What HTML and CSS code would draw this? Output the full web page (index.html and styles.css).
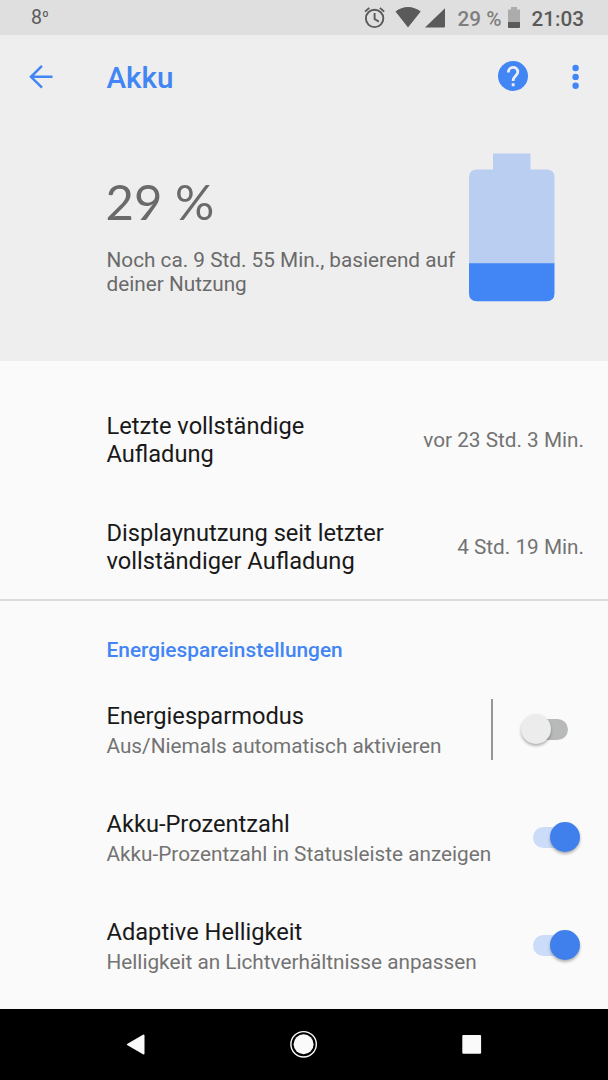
FILE: index.html
```html
<!DOCTYPE html>
<html lang="de">
<head>
<meta charset="utf-8">
<title>Akku</title>
<link rel="stylesheet" href="styles.css">
</head>
<body>
<div class="screen">
  <div class="status">
    <span class="temp">8<span class="degree">º</span></span>
    <svg class="status-icons" width="84" height="35" viewBox="0 0 84 35">
      <g fill="none" stroke="#5a5a5a" stroke-width="1.9">
        <circle cx="12.6" cy="18.4" r="8.7"/>
        <path d="M12.6 13v6l4.2 2.600M3 11.600l4.300-3.700M22.200 11.600l-4.300-3.700"/>
      </g>
      <path fill="#5a5a5a" d="M33.500 11.600C41 5.500 51 5.500 58.700 11.600L46 27.600zM63 27.600L83 8.200v18.400q0 1-1 1z"/>
    </svg>
    <span class="percent">29 %</span>
    <svg class="mini-battery" width="14" height="35" viewBox="0 0 14 35">
      <path fill="#acacac" d="M1 9.500h3V7h6v2.500h3v13H1z"/>
      <path fill="#5a5a5a" d="M1 22h12v5q0 1-1 1H2q-1 0-1-1z"/>
    </svg>
    <span class="clock">21:03</span>
  </div>
  <header class="hero">
    <div class="appbar">
      <svg class="back" width="24" height="24" viewBox="0 0 24 24"><path d="M23.500 11.800H2M13 .9L2 11.800l11 10.900" fill="none" stroke="#4285f4" stroke-width="2.500"/></svg>
      <h1 class="title">Akku</h1>
      <svg class="help" width="30" height="30" viewBox="0 0 30 30">
        <circle cx="15" cy="15" r="15" fill="#4285f4"/>
        <path d="M10.300 11.500C10.300 4.700 19.800 4.700 19.800 11c0 3.900-4.700 3.900-4.700 9" fill="none" stroke="#eee" stroke-width="2.800"/>
        <path d="M13.700 22.300h2.900v2.900h-2.900z" fill="#eee"/>
      </svg>
      <svg class="more" width="8" height="26" viewBox="0 0 8 26" fill="#4285f4"><circle cx="3.600" cy="4" r="3.200"/><circle cx="3.600" cy="12.900" r="3.200"/><circle cx="3.600" cy="21.800" r="3.200"/></svg>
    </div>
    <div class="summary">
      <div class="estimate">
        <div class="level">29 %</div>
        <p class="remaining">Noch ca. 9 Std. 55 Min., basierend auf<br>deiner Nutzung</p>
      </div>
      <svg class="battery" width="86" height="149" viewBox="0 0 86 149">
        <path fill="#b9cef1" d="M24 .5h37.500v16H77.500q8 0 8 8v87H0V24.500q0-8 8-8h16z"/>
        <path fill="#4285f4" d="M0 110.300h85.500v30q0 8-8 8H8q-8 0-8-8z"/>
      </svg>
    </div>
  </header>
  <main class="settings">
    <section class="usage">
      <div class="row"><div class="name">Letzte vollständige<br>Aufladung</div><div class="value">vor 23 Std. 3 Min.</div></div>
      <div class="row"><div class="name">Displaynutzung seit letzter<br>vollständiger Aufladung</div><div class="value">4 Std. 19 Min.</div></div>
    </section>
    <section class="saving">
      <h2 class="heading">Energiespareinstellungen</h2>
      <div class="row option">
        <div><div class="name">Energiesparmodus</div><div class="detail">Aus/Niemals automatisch aktivieren</div></div>
        <div class="split"><span class="switch off"><span class="thumb"></span></span></div>
      </div>
      <div class="row option">
        <div><div class="name">Akku-Prozentzahl</div><div class="detail">Akku-Prozentzahl in Statusleiste anzeigen</div></div>
        <span class="switch on"><span class="thumb"></span></span>
      </div>
      <div class="row option">
        <div><div class="name">Adaptive Helligkeit</div><div class="detail">Helligkeit an Lichtverhältnisse anpassen</div></div>
        <span class="switch on"><span class="thumb"></span></span>
      </div>
    </section>
  </main>
  <nav class="navbar">
    <svg width="608" height="71" viewBox="0 0 608 71" fill="#fafafa">
      <path d="M128 35.500L143.500 26.500v18z" stroke="#fafafa" stroke-width="2" stroke-linejoin="round"/>
      <circle cx="303.600" cy="35.300" r="10"/>
      <circle cx="303.600" cy="35.300" r="12.700" fill="none" stroke="#fafafa" stroke-width="1.400"/>
      <rect x="462.300" y="26" width="18.800" height="18.800" rx="1"/>
    </svg>
  </nav>
</div>
</body>
</html>
```

FILE: styles.css
```css
* { box-sizing: border-box; }
body { margin: 0; font-family: Roboto, sans-serif; }
h1, h2, p { margin: 0; font-weight: 500; }
svg { display: block; flex: none; }
.screen { width: 608px; height: 1080px; display: flex; flex-direction: column; background: #fafafa; overflow: hidden; }
.status { height: 35px; flex: none; display: flex; align-items: center; padding: 0 24px 0 31px; background: #dfdfdf; color: #5a5a5a; font-size: 20.7px; }
.temp { font-size: 19.5px; flex: 1; }
.degree { font-size: 15px; font-weight: 400; vertical-align: 2px; }
.status-icons { margin-right: 12px; }
.percent { color: #7e7e7e; margin-right: 5px; padding-top: 2px; font-weight: 500; }
.mini-battery { margin-right: 11px; }
.clock { font-weight: 500; padding-top: 2px; }
.hero { height: 326px; flex: none; background: #eee; }
.appbar { height: 83px; display: flex; align-items: center; padding: 0 28px 0 29px; }
.title { flex: 1; margin-left: 53.5px; padding-top: 2px; color: #4285f4; font-size: 29.6px; }
.help { margin: -1px 44px 0 0; }
.more { margin-top: 1px; }
.summary { display: flex; padding: 35px 53px 0 106.5px; justify-content: space-between; }
.estimate { flex: none; width: 350px; padding-top: 15px; color: #6a6a6a; }
.level { font: 49px/66px Lato, sans-serif; margin-left: -1px; }
.remaining { font-size: 20.75px; font-weight: 400; line-height: 24.3px; padding-top: 14px; white-space: nowrap; }
.settings { flex: 1; }
.usage { padding-top: 24px; border-bottom: 2px solid #dcdcdc; }
.usage .name { padding-top: 4px; }
.row { display: flex; align-items: center; justify-content: space-between; height: 107px; padding: 0 24px 0 106.5px; }
.name { color: #191919; font-size: 23.65px; line-height: 27.7px; }
.value, .detail { color: #737373; font-size: 20.75px; line-height: 24px; white-space: nowrap; }
.value { padding-top: 2px; }
.heading { height: 75px; padding: 37px 0 0 106.5px; color: #4285f4; font-size: 20.85px; line-height: 24px; }
.option { height: 108px; padding-right: 28.5px; }
.option .name { margin-top: 1px; }
.detail { padding-top: 4px; }
.split { width: 89px; height: 61px; margin-bottom: 2px; display: flex; align-items: center; justify-content: flex-end; border-left: 2px solid #979797; padding-right: 12px; }
.switch { width: 47px; height: 21px; display: flex; align-items: center; border-radius: 11px; margin-top: -2px; }
.split .switch { margin-top: 0; }
.thumb { width: 30px; height: 30px; flex: none; border-radius: 50%; box-shadow: 0 2px 3px rgba(0, 0, 0, .3); }
.off { background: linear-gradient(90deg, transparent 40%, #b8baba 40%); }
.off .thumb { background: #ececec; }
.on { background: linear-gradient(90deg, #cbdcf8 70%, transparent 70%); justify-content: flex-end; }
.on .thumb { background: #4080ec; }
.navbar { height: 71px; background: #000; }
```
